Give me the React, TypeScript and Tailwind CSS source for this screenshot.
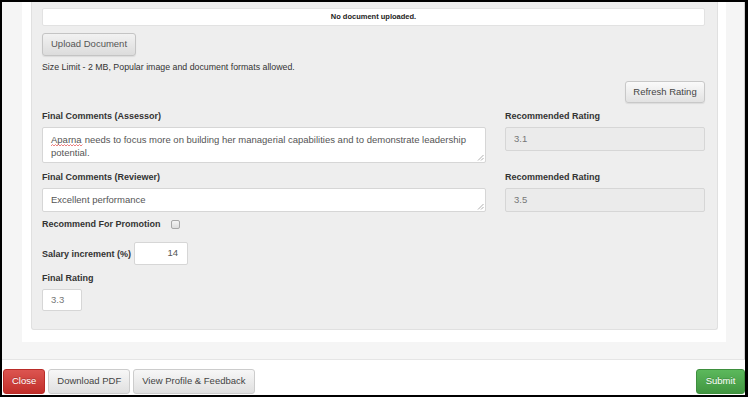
import React from 'react';

const font = "font-['Liberation_Sans',Arial,sans-serif]";

const ResizeGrip = () => (
  <svg className="absolute right-[1px] bottom-[1px]" width="7" height="7" viewBox="0 0 7 7">
    <line x1="6.5" y1="1" x2="1" y2="6.5" stroke="#9a9a9a" strokeWidth="0.8" />
    <line x1="6.5" y1="4" x2="4" y2="6.5" stroke="#9a9a9a" strokeWidth="0.8" />
  </svg>
);

const Squiggle = () => (
  <svg className="absolute left-0 bottom-[-1px]" width="32" height="3" viewBox="0 0 32 3">
    <path
      d="M0 2 L1.5 0.5 L3 2 L4.5 0.5 L6 2 L7.5 0.5 L9 2 L10.5 0.5 L12 2 L13.5 0.5 L15 2 L16.5 0.5 L18 2 L19.5 0.5 L21 2 L22.5 0.5 L24 2 L25.5 0.5 L27 2 L28.5 0.5 L30 2 L31.5 0.5"
      fill="none"
      stroke="#e24b4b"
      strokeWidth="0.7"
    />
  </svg>
);

const Label: React.FC<{ children: React.ReactNode }> = ({ children }) => (
  <div className="text-[9px] leading-[12px] font-bold text-[#333]">{children}</div>
);

const App: React.FC = () => {
  return (
    <div
      className={`${font} w-[748px] h-[397px] border-l-2 border-t-2 border-b-2 border-r-[3px] border-black bg-white flex flex-col overflow-hidden`}
    >
      {/* Scrolled modal body */}
      <div className="h-[358px] bg-[#f5f5f5] pl-[20px] pr-[18px] border-r border-[#cfcfcf] border-b border-b-[#e5e5e5]">
        <div className="bg-white pl-[9px] pr-[8px] pb-[12px]">
          <div className="bg-[#eeeeee] border-l border-r border-b border-[#e0e0e0] rounded-b-[3px] pl-[10px] pr-[12px] pt-[6px] pb-[18px]">
            {/* Document box */}
            <div className="h-[18px] bg-white border border-[#e2e2e2] rounded-[2px] flex items-center justify-center text-[7.5px] font-bold text-[#222]">
              No document uploaded.
            </div>

            <button className="mt-[7px] h-[23px] px-[8px] rounded-[3px] border border-[#c4c4c4] bg-linear-to-b from-[#f2f2f2] to-[#dcdcdc] shadow-[0_1px_1px_rgba(0,0,0,0.08)] text-[9.5px] text-[#555] flex items-center">
              Upload Document
            </button>

            <div className="mt-[4px] text-[8.8px] leading-[14px] text-[#333]">
              Size Limit - 2 MB, Popular image and document formats allowed.
            </div>

            <div className="mt-[7px] flex justify-end">
              <button className="h-[22px] w-[80px] rounded-[3px] border border-[#c8c8c8] bg-linear-to-b from-[#fafafa] to-[#e2e2e2] shadow-[0_1px_1px_rgba(0,0,0,0.08)] text-[9.5px] text-[#444] flex items-center justify-center">
                Refresh Rating
              </button>
            </div>

            {/* Assessor row */}
            <div className="mt-[7px] flex justify-between">
              <div className="w-[444px]">
                <Label>Final Comments (Assessor)</Label>
              </div>
              <div className="w-[200px]">
                <Label>Recommended Rating</Label>
              </div>
            </div>
            <div className="mt-[5px] flex justify-between items-start">
              <div className="relative w-[444px] h-[36px] bg-white border border-[#d6d6d6] rounded-[2px] px-[8px] pt-[5px] text-[9.5px] leading-[13px] text-[#555]">
                <div className="flex gap-[3px]">
                  <span className="relative">
                    Aparna
                    <Squiggle />
                  </span>
                  <span>needs to focus more on building her managerial capabilities and to demonstrate leadership</span>
                </div>
                <div>potential.</div>
                <ResizeGrip />
              </div>
              <div className="w-[200px] h-[24px] bg-[#ebebeb] border border-[#d6d6d6] rounded-[2px] px-[8px] flex items-center text-[9.5px] text-[#777]">
                3.1
              </div>
            </div>

            {/* Reviewer row */}
            <div className="mt-[8px] flex justify-between">
              <div className="w-[444px]">
                <Label>Final Comments (Reviewer)</Label>
              </div>
              <div className="w-[200px]">
                <Label>Recommended Rating</Label>
              </div>
            </div>
            <div className="mt-[5px] flex justify-between items-start">
              <div className="relative w-[444px] h-[24px] bg-white border border-[#d6d6d6] rounded-[2px] px-[8px] flex items-center text-[9.5px] text-[#555]">
                Excellent performance
                <ResizeGrip />
              </div>
              <div className="w-[200px] h-[24px] bg-[#ebebeb] border border-[#d6d6d6] rounded-[2px] px-[8px] flex items-center text-[9.5px] text-[#777]">
                3.5
              </div>
            </div>

            {/* Promotion */}
            <div className="mt-[6px] flex items-center gap-[10px]">
              <Label>Recommend For Promotion</Label>
              <span className="w-[9px] h-[9px] rounded-[2px] border border-[#a8a8a8] bg-linear-to-b from-[#f4f4f4] to-[#dddddd]" />
            </div>

            {/* Salary */}
            <div className="mt-[12px] flex items-center gap-[3px]">
              <Label>Salary increment (%)</Label>
              <div className="w-[54px] h-[23px] bg-white border border-[#d6d6d6] rounded-[2px] pr-[9px] flex items-center justify-end text-[9.5px] text-[#555]">
                14
              </div>
            </div>

            {/* Final rating */}
            <div className="mt-[7px]">
              <Label>Final Rating</Label>
            </div>
            <div className="mt-[5px] w-[40px] h-[22px] bg-white border border-[#d6d6d6] rounded-[2px] px-[8px] flex items-center text-[9.5px] text-[#777]">
              3.3
            </div>
          </div>
        </div>
      </div>

      {/* Footer */}
      <div className="flex-1 bg-white flex items-end justify-between pl-[1px] pb-[1px]">
        <div className="flex gap-[3px]">
          <button className="h-[25px] px-[8px] rounded-[3px] border border-[#b92c28] bg-linear-to-b from-[#dc5450] to-[#c12e2a] text-white text-[9.5px] [text-shadow:0_-1px_0_rgba(0,0,0,0.2)]">
            Close
          </button>
          <button className="h-[25px] px-[8px] rounded-[3px] border border-[#cccccc] bg-linear-to-b from-[#f7f7f7] to-[#e0e0e0] text-[#444] text-[9.5px]">
            Download PDF
          </button>
          <button className="h-[25px] px-[8px] rounded-[3px] border border-[#cccccc] bg-linear-to-b from-[#f7f7f7] to-[#e0e0e0] text-[#444] text-[9.5px]">
            View Profile &amp; Feedback
          </button>
        </div>
        <button className="h-[25px] w-[49px] rounded-[3px] border border-[#3e8f3e] bg-linear-to-b from-[#5cb85c] to-[#419641] text-white text-[9.5px] [text-shadow:0_-1px_0_rgba(0,0,0,0.2)]">
          Submit
        </button>
      </div>
    </div>
  );
};

export default App;
